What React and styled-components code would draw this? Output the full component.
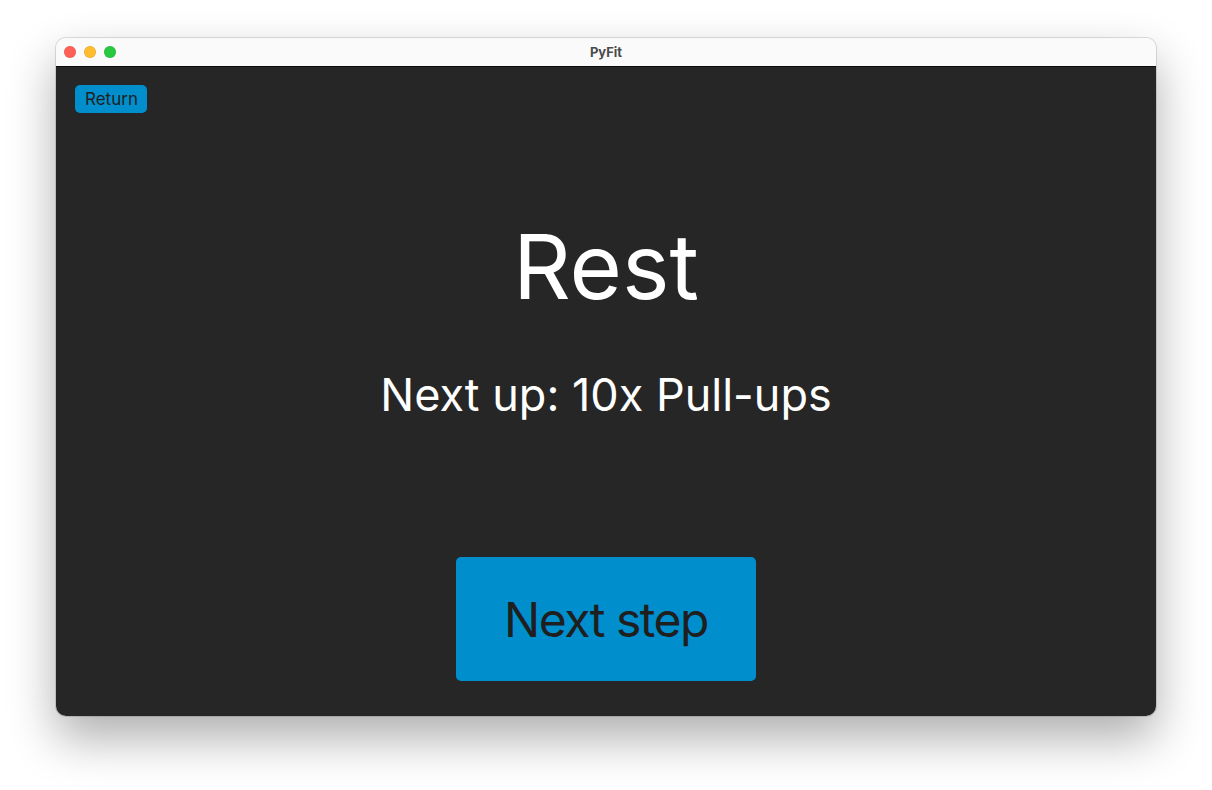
import React from "react";
import styled, { createGlobalStyle } from "styled-components";

const GlobalStyle = createGlobalStyle`
  html, body {
    margin: 0;
    padding: 0;
    background: #ffffff;
  }
  body {
    font-family: Inter, "Noto Sans", sans-serif;
  }
`;

const Page = styled.div`
  width: 1212px;
  height: 790px;
  padding: 38px 0 0 56px;
  box-sizing: border-box;
`;

const Window = styled.div`
  width: 1100px;
  height: 678px;
  border-radius: 10px;
  overflow: hidden;
  display: flex;
  flex-direction: column;
  box-shadow: 0 0 0 1px rgba(0, 0, 0, 0.12), 0 22px 48px rgba(0, 0, 0, 0.32);
`;

const TitleBar = styled.div`
  height: 28px;
  flex-shrink: 0;
  background: #fafafa;
  border-bottom: 1px solid #0d0d0d;
  display: flex;
  align-items: center;
  position: relative;
  padding-left: 8px;
  gap: 8px;
`;

const Light = styled.span`
  width: 12px;
  height: 12px;
  border-radius: 50%;
  background: ${(p) => p.color};
  box-shadow: inset 0 0 0 0.5px rgba(0, 0, 0, 0.12);
`;

const Title = styled.div`
  position: absolute;
  left: 0;
  right: 0;
  text-align: center;
  font-size: 13px;
  font-weight: 700;
  color: #4a4a4a;
  pointer-events: none;
`;

const Content = styled.div`
  flex: 1;
  background: #262626;
  display: flex;
  flex-direction: column;
  align-items: center;
  padding: 18px 19px 0;
`;

const SmallButton = styled.button`
  align-self: flex-start;
  height: 28px;
  padding: 0 9px 0 10px;
  border: none;
  border-radius: 5px;
  background: #008ecc;
  color: #1f1f1f;
  font-family: Inter, "Noto Sans", sans-serif;
  font-size: 17px;
`;

const Heading = styled.div`
  margin-top: 109px;
  font-size: 90px;
  line-height: 90px;
  color: #ffffff;
`;

const Subtitle = styled.div`
  margin-top: 60px;
  font-size: 45px;
  line-height: 45px;
  color: #ffffff;
`;

const BigButton = styled.button`
  margin-top: 140px;
  width: 300px;
  height: 124px;
  border: none;
  border-radius: 5px;
  background: #008ecc;
  color: #1f1f1f;
  font-family: Inter, "Noto Sans", sans-serif;
  font-size: 48px;
  letter-spacing: -1.5px;
`;

export default function App() {
  return (
    <>
      <GlobalStyle />
      <Page>
        <Window>
          <TitleBar>
            <Light color="#fe5f57" />
            <Light color="#febc2e" />
            <Light color="#28c840" />
            <Title>PyFit</Title>
          </TitleBar>
          <Content>
            <SmallButton>Return</SmallButton>
            <Heading>Rest</Heading>
            <Subtitle>Next up: 10x Pull-ups</Subtitle>
            <BigButton>Next step</BigButton>
          </Content>
        </Window>
      </Page>
    </>
  );
}
